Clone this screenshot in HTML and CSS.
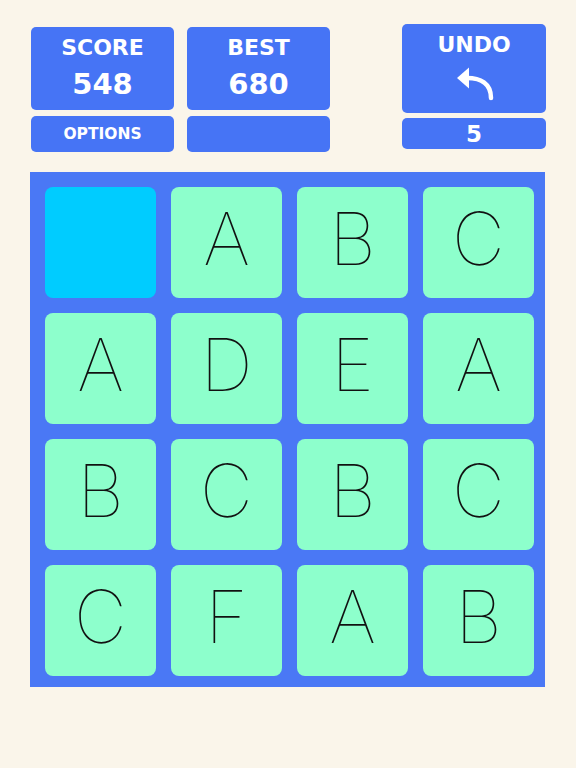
FILE: index.html
```html
<!DOCTYPE html>
<html>
<head>
<meta charset="utf-8">
<link rel="stylesheet" href="styles.css">
</head>
<body>
<div class="page">
  <div class="top">
    <div class="col">
      <div class="box stat">
        <div class="label">SCORE</div>
        <div class="value">548</div>
      </div>
      <div class="box small">OPTIONS</div>
    </div>
    <div class="col">
      <div class="box stat">
        <div class="label">BEST</div>
        <div class="value">680</div>
      </div>
      <div class="box small"></div>
    </div>
    <div class="col undo-col">
      <div class="box undo">
        <div class="label">UNDO</div>
        <svg class="arrow" width="38" height="34" viewBox="0 0 38 34">
          <polygon points="0,11 12,0.5 12,21.5" fill="#fff"/>
          <path d="M10 11 C 23 11, 34 16, 34 31" fill="none" stroke="#fff" stroke-width="4.5" stroke-linecap="round"/>
        </svg>
      </div>
      <div class="box count">5</div>
    </div>
  </div>
  <div class="board">
    <div class="tile empty"></div>
    <div class="tile">A</div>
    <div class="tile">B</div>
    <div class="tile">C</div>
    <div class="tile">A</div>
    <div class="tile">D</div>
    <div class="tile">E</div>
    <div class="tile">A</div>
    <div class="tile">B</div>
    <div class="tile">C</div>
    <div class="tile">B</div>
    <div class="tile">C</div>
    <div class="tile">C</div>
    <div class="tile">F</div>
    <div class="tile">A</div>
    <div class="tile">B</div>
  </div>
</div>
</body>
</html>
```
FILE: styles.css
```css
html, body {
  margin: 0;
  padding: 0;
  background: #faf5ea;
}
.page {
  width: 576px;
  height: 768px;
  padding: 24px 0 0 30px;
  box-sizing: border-box;
}
.top {
  display: flex;
  align-items: flex-start;
  height: 148px;
}
.col {
  display: flex;
  flex-direction: column;
  gap: 6px;
  width: 143px;
  margin-top: 3px;
  margin-left: 1px;
  margin-right: 12px;
}
.undo-col {
  margin-top: 0;
  margin-left: 60px;
  width: 144px;
  gap: 5px;
}
.box {
  background: #4674f5;
  border-radius: 5px;
  color: #fff;
  font-family: "DejaVu Sans", Verdana, sans-serif;
  font-weight: bold;
  text-align: center;
  box-sizing: border-box;
}
.stat {
  height: 83px;
  padding-top: 8px;
}
.label {
  font-size: 22px;
  line-height: 26px;
}
.value {
  font-size: 29px;
  line-height: 40px;
  margin-top: 3px;
}
.small {
  height: 36px;
  font-size: 15.5px;
  line-height: 36px;
}
.undo {
  height: 89px;
  padding-top: 8px;
}
.arrow {
  display: block;
  margin: 9px auto 0 auto;
  position: relative;
  left: 2px;
}
.count {
  height: 31px;
  font-size: 23px;
  line-height: 33px;
}
.board {
  margin-top: 0;
  width: 515px;
  height: 515px;
  box-sizing: border-box;
  background: #4a78f5;
  padding: 15px 12px 12px 15px;
  display: grid;
  grid-template-columns: repeat(4, 111px);
  grid-template-rows: repeat(4, 111px);
  gap: 15px;
}
.tile {
  background: #8dffcc;
  border-radius: 8px;
  font-family: "Inter", "Roboto", sans-serif;
  font-weight: 100;
  font-size: 73px;
  color: #111;
  display: flex;
  align-items: center;
  justify-content: center;
  padding-bottom: 8px;
  box-sizing: border-box;
}
.tile.empty {
  background: #00ccff;
}
```
